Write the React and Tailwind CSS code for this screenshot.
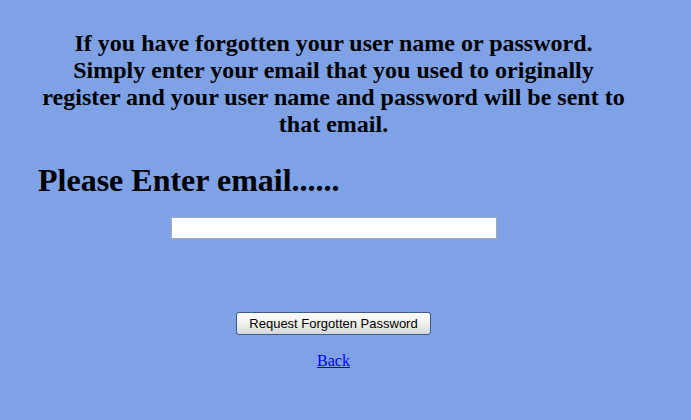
export default function App() {
  return (
    <div className="min-h-[420px] w-full bg-[#7fa1e6] font-['Liberation_Serif',serif] text-black">
      <div className="w-[667px] pt-[30px]">
        <p className="mx-auto w-[592px] text-center text-[24px] font-bold leading-[27px]">
          If you have forgotten your user name or password.
          <br />
          Simply enter your email that you used to originally register and your user name and password will be sent to that email.
        </p>
        <h1 className="mt-[24px] pl-[38px] text-[32px] font-bold leading-[37px]">
          Please Enter email......
        </h1>
        <div className="mt-[18px] flex justify-center">
          <input
            type="text"
            className="h-[22px] w-[326px] border border-[#a5acb5] bg-white px-1 text-[13px] outline-none"
          />
        </div>
        <div className="mt-[73px] flex justify-center">
          <button className="h-[23px] rounded-[3px] border border-[#3d5a8c] bg-gradient-to-b from-white via-[#f0f0ec] to-[#d6d7dc] px-[12px] font-['Liberation_Sans',sans-serif] text-[13px] leading-none text-black">
            Request Forgotten Password
          </button>
        </div>
        <div className="mt-[17px] text-center text-[16px] leading-[18px]">
          <a href="#" className="text-[#0000ff] underline">
            Back
          </a>
        </div>
      </div>
    </div>
  );
}
